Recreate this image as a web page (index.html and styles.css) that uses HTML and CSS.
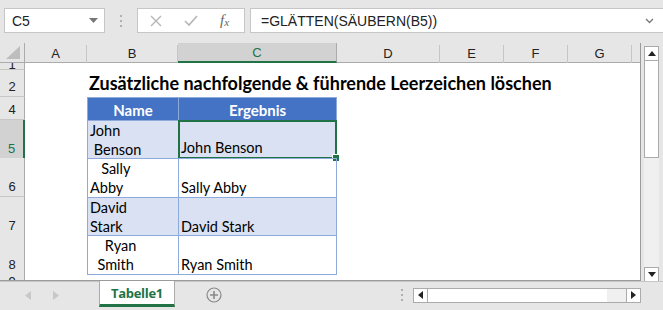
FILE: index.html
```html
<!DOCTYPE html>
<html lang="de">
<head>
<meta charset="utf-8">
<title>Excel</title>
<link rel="stylesheet" href="styles.css">
</head>
<body>
<div class="app">
  <div class="topbar">
    <div class="namebox"><span>C5</span>
      <svg class="dd" width="9" height="5" viewBox="0 0 9 5"><path d="M0 0H9L4.5 5Z" fill="#777"/></svg>
    </div>
    <div class="vdots"><i></i><i></i><i></i></div>
    <div class="fxbox">
      <svg width="14" height="14" viewBox="0 0 14 14"><path d="M2 2L12 12M12 2L2 12" stroke="#b5b5b5" stroke-width="1.4" fill="none"/></svg>
      <svg width="16" height="14" viewBox="0 0 16 14"><path d="M2 7L6 11L14 2" stroke="#b5b5b5" stroke-width="1.6" fill="none"/></svg>
      <span class="fx">f<sub>x</sub></span>
    </div>
    <div class="formula"><span>=GLÄTTEN(SÄUBERN(B5))</span>
      <svg width="9" height="6" viewBox="0 0 9 6"><path d="M1 1L4.5 4.5L8 1" stroke="#777" stroke-width="1.3" fill="none"/></svg>
    </div>
  </div>
  <div class="middle">
    <div class="sheet">
      <div class="hrow">
        <div class="corner"><svg width="16" height="14" viewBox="0 0 16 14"><path d="M15 0V13H1Z" fill="#bdbdbd"/></svg></div>
        <div class="ch">A</div><div class="ch">B</div><div class="ch sel">C</div><div class="ch">D</div><div class="ch">E</div><div class="ch">F</div><div class="ch">G</div><div class="ch last"></div>
      </div>
      <div class="row r1">
        <div class="rh">1</div><div></div><div></div><div></div><div></div><div></div><div></div><div></div><div></div>
      </div>
      <div class="row r2">
        <div class="rh">2</div><div></div><div class="title">Zusätzliche nachfolgende &amp; führende Leerzeichen löschen</div><div></div><div></div><div></div><div></div><div></div><div></div>
      </div>
      <div class="row r4">
        <div class="rh">4</div><div></div><div class="th">Name</div><div class="th">Ergebnis</div><div></div><div></div><div></div><div></div><div></div>
      </div>
      <div class="row r5">
        <div class="rh sel">5</div><div></div><div class="td band name">John
 Benson</div><div class="td band res active">John Benson<i class="handle"></i></div><div></div><div></div><div></div><div></div><div></div>
      </div>
      <div class="row r6">
        <div class="rh">6</div><div></div><div class="td name">   Sally
Abby</div><div class="td res">Sally Abby</div><div></div><div></div><div></div><div></div><div></div>
      </div>
      <div class="row r7">
        <div class="rh">7</div><div></div><div class="td band name">David
Stark</div><div class="td band res">David Stark</div><div></div><div></div><div></div><div></div><div></div>
      </div>
      <div class="row r8">
        <div class="rh">8</div><div></div><div class="td name">    Ryan
  Smith</div><div class="td res">Ryan Smith</div><div></div><div></div><div></div><div></div><div></div>
      </div>
      <div class="row r9">
        <div class="rh">9</div><div></div><div></div><div></div><div></div><div></div><div></div><div></div><div></div>
      </div>
    </div>
    <div class="vscroll">
      <div class="sbtn"><svg width="8" height="5" viewBox="0 0 8 5"><path d="M0 5H8L4 0Z" fill="#222"/></svg></div>
      <div class="vthumb"></div>
      <div class="vtrack"></div>
      <div class="sbtn"><svg width="8" height="5" viewBox="0 0 8 5"><path d="M0 0H8L4 5Z" fill="#222"/></svg></div>
    </div>
  </div>
  <div class="bottombar">
    <div class="nav">
      <svg width="6" height="9" viewBox="0 0 6 9"><path d="M6 0V9L0 4.5Z" fill="#c8c8c8"/></svg>
      <svg width="6" height="9" viewBox="0 0 6 9"><path d="M0 0V9L6 4.5Z" fill="#c8c8c8"/></svg>
    </div>
    <div class="tab">Tabelle1</div>
    <div class="addsheet"><svg width="16" height="16" viewBox="0 0 16 16"><circle cx="8" cy="8" r="7" fill="none" stroke="#8a8a8a" stroke-width="1.2"/><path d="M8 4V12M4 8H12" stroke="#8a8a8a" stroke-width="1.6"/></svg></div>
    <div class="spacer"></div>
    <div class="vdots small"><i></i><i></i><i></i></div>
    <div class="hscroll">
      <div class="sbtn h"><svg width="5" height="8" viewBox="0 0 5 8"><path d="M5 0V8L0 4Z" fill="#222"/></svg></div>
      <div class="hthumb"></div>
      <div class="htrack"></div>
      <div class="sbtn h"><svg width="5" height="8" viewBox="0 0 5 8"><path d="M0 0V8L5 4Z" fill="#222"/></svg></div>
    </div>
  </div>
</div>
</body>
</html>
```

FILE: styles.css
```css
* { box-sizing: border-box; }
html, body { margin: 0; padding: 0; }
body { width: 663px; height: 310px; overflow: hidden; background: #e6e6e6; font-family: "Segoe UI", "Open Sans", "Liberation Sans", sans-serif; }
.app { width: 663px; height: 310px; display: flex; flex-direction: column; background: #e6e6e6; }

.topbar { height: 43px; flex: none; display: flex; align-items: flex-start; padding-top: 8px; padding-left: 4px; }
.namebox { width: 101px; height: 25px; background: #fff; border: 1px solid #c6c6c6; display: flex; align-items: center; justify-content: space-between; padding: 0 6px 0 7px; font-family: "Liberation Sans", sans-serif; font-size: 14px; color: #222; }
.vdots { width: 32px; height: 25px; display: flex; flex-direction: column; align-items: center; justify-content: center; gap: 3px; }
.vdots i { width: 2px; height: 2px; background: #b0b0b0; display: block; }
.fxbox { width: 108px; height: 25px; background: #fff; border: 1px solid #c6c6c6; display: flex; align-items: center; padding: 0 0 0 11px; gap: 20px; }
.fx { font-family: "Liberation Serif", serif; font-style: italic; font-size: 15px; color: #666; margin-left: 1px; }
.fx sub { font-size: 11px; vertical-align: -1px; }
.formula { margin-left: 5px; width: 413px; height: 25px; background: #fff; border: 1px solid #c6c6c6; border-right: none; display: flex; align-items: center; justify-content: space-between; padding: 0 9px 0 10px; font-family: "Liberation Sans", sans-serif; font-size: 14px; color: #222; }

.middle { height: 238px; flex: none; display: flex; }
.sheet { width: 641px; height: 238px; background: #fff; border-right: 1px solid #9b9b9b; border-bottom: 1px solid #9b9b9b; display: flex; flex-direction: column; overflow: hidden; }
.hrow, .row { flex: none; display: grid; grid-template-columns: 25px 62px 91px 159px 103px 64px 64px 64px 8px; }
.hrow { height: 20px; background: #e6e6e6; border-bottom: 1px solid #ababab; }
.corner { border-right: 1px solid #ababab; display: flex; align-items: flex-end; justify-content: center; padding-bottom: 3px; padding-left: 2px; }
.ch { display: flex; align-items: center; justify-content: center; font-family: "Liberation Sans", sans-serif; font-size: 13px; color: #222; border-right: 1px solid #c6c6c6; margin-top: 2px; padding-bottom: 1px; }
.ch.sel { background: #d2d2d2; color: #217346; border-bottom: 2px solid #217346; border-right: 1px solid #ababab; margin-top: 0; padding-top: 2px; }
.ch.last { border-right: none; }

.row > div { min-width: 0; }
.rh { background: #e6e6e6; border-right: 1px solid #ababab; border-bottom: 1px solid #c6c6c6; display: flex; align-items: flex-end; justify-content: center; padding-bottom: 2px; font-family: "Liberation Sans", sans-serif; font-size: 13px; color: #222; overflow: hidden; }
.rh.sel { background: #d2d2d2; color: #217346; border-right: 2px solid #217346; }
.r1 { height: 7px; }
.r1 .rh { align-items: flex-start; padding: 0; line-height: 4px; }
.r2 { height: 27px; }
.r4 { height: 23px; }
.r5 { height: 38px; }
.r6 { height: 39px; }
.r7 { height: 38px; }
.r8 { height: 38px; }
.r9 { height: 10px; }
.r9 .rh { border-bottom: none; align-items: flex-start; padding-top: 1px; }

.title { white-space: nowrap; overflow: visible; font-family: Lato, "Liberation Sans", sans-serif; font-weight: 700; font-size: 18px; color: #000; display: flex; align-items: flex-end; padding: 0 0 3px 2px; position: relative; z-index: 1; }

.th { background: #4472c4; color: #fff; font-family: Lato, "Liberation Sans", sans-serif; font-weight: 700; font-size: 15px; display: flex; align-items: flex-end; justify-content: center; padding-bottom: 1px; border-left: 1px solid #8eaadb; border-top: 1px solid #8eaadb; }
.th + .th { border-right: 1px solid #8eaadb; }
.td { font-family: Lato, "Liberation Sans", sans-serif; font-size: 14.5px; color: #000; white-space: pre; line-height: 19px; display: flex; align-items: flex-end; padding: 0 0 0 2px; border-left: 1px solid #8eaadb; border-top: 1px solid #8eaadb; position: relative; }
.td.res { border-right: 1px solid #8eaadb; }
.r8 .td { border-bottom: 1px solid #8eaadb; }
.td.band { background: #d9e1f2; }
.td.active { border: 2px solid #217346; padding-left: 1px; }
.handle { position: absolute; right: -5px; bottom: -5px; width: 8px; height: 8px; background: #217346; border: 1px solid #fff; }

.vscroll { margin-left: 3px; margin-top: 3px; width: 15px; height: 236px; display: flex; flex-direction: column; }
.sbtn { width: 15px; height: 15px; background: #fff; border: 1px solid #ababab; display: flex; align-items: center; justify-content: center; flex: none; }
.vthumb { height: 97px; background: #fff; border: 1px solid #ababab; border-top: none; }
.vtrack { flex: 1; background: #f0f0f0; }

.bottombar { height: 29px; flex: none; display: flex; align-items: stretch; border-top: 1px solid #c6c6c6; }
.nav { width: 99px; display: flex; align-items: center; padding-left: 25px; gap: 22px; padding-bottom: 2px; }
.tab { width: 76px; background: #fff; border-left: 1px solid #ababab; border-right: 1px solid #ababab; border-bottom: 3px solid #217346; margin-top: -1px; margin-bottom: 3px; display: flex; align-items: center; justify-content: center; font-family: "Open Sans", sans-serif; font-weight: 700; font-size: 13px; color: #217346; letter-spacing: -0.3px; }
.addsheet { width: 82px; display: flex; align-items: center; justify-content: center; padding-right: 4px; padding-bottom: 2px; }
.spacer { flex: 1; }
.vdots.small { width: 14px; height: auto; gap: 3px; padding-bottom: 2px; }
.hscroll { width: 228px; margin-left: 4px; margin-right: 22px; height: 15px; align-self: center; display: flex; margin-bottom: 2px; }
.sbtn.h { width: 15px; height: 15px; }
.hthumb { width: 179px; background: #fff; border-top: 1px solid #ababab; border-bottom: 1px solid #ababab; }
.htrack { flex: 1; background: #f0f0f0; border-top: 1px solid #ababab; border-bottom: 1px solid #ababab; }
```
